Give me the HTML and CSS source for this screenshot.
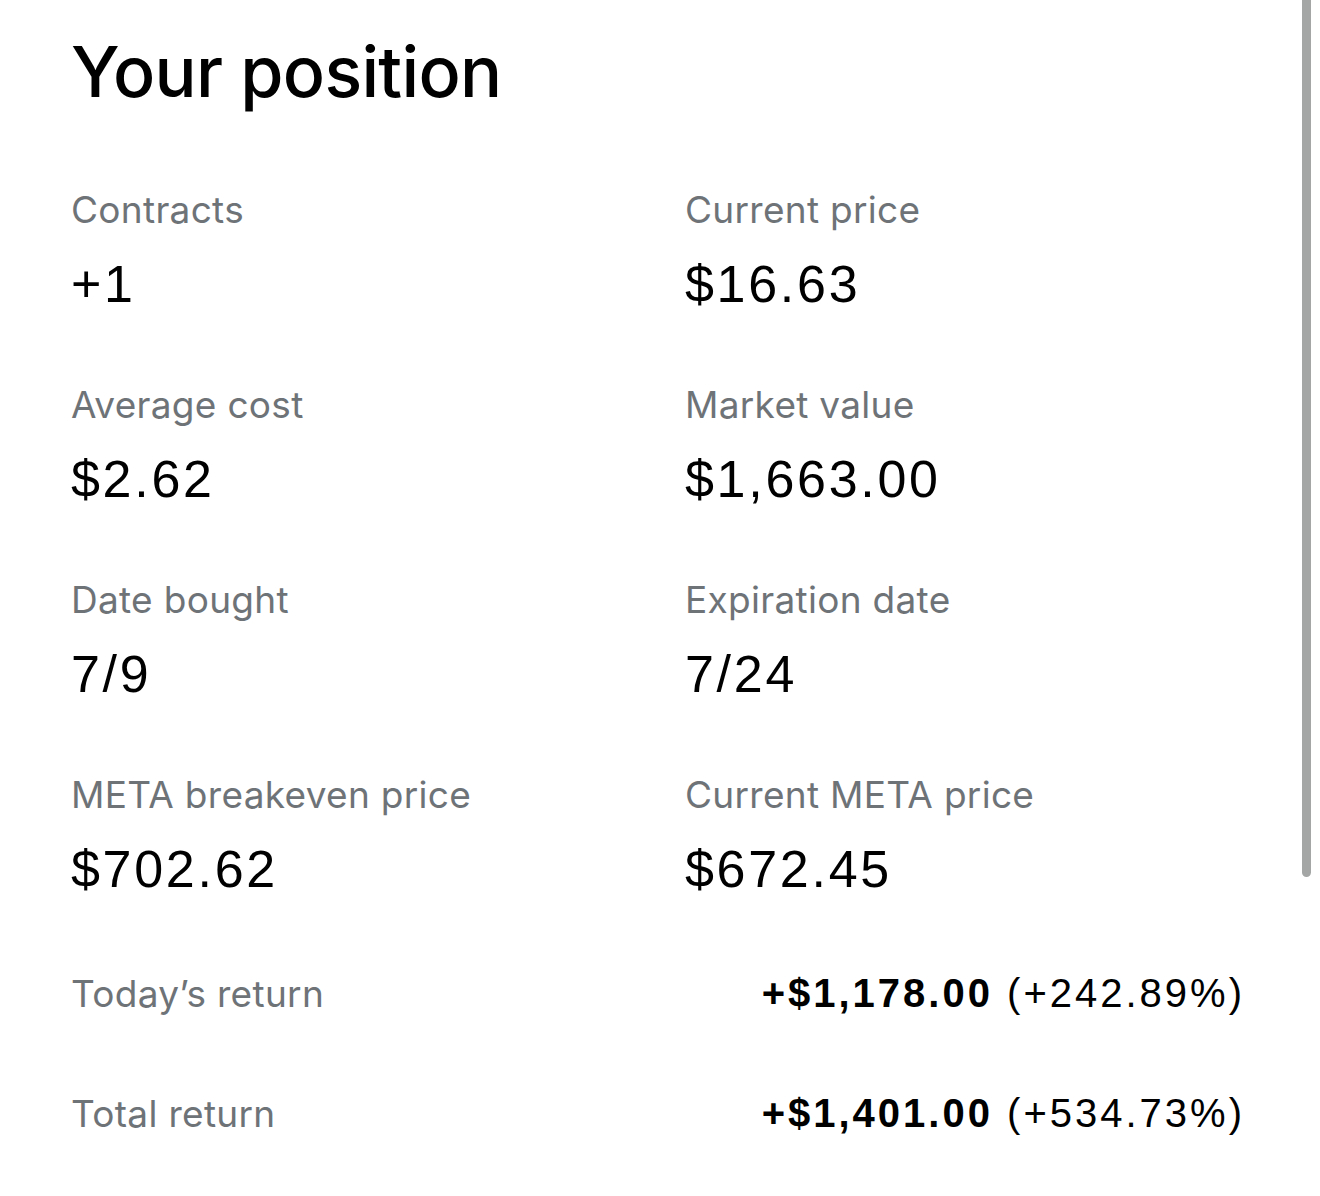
FILE: index.html
```html
<!DOCTYPE html>
<html lang="en">
<head>
    <meta charset="UTF-8">
    <title>Your position</title>
    <link rel="stylesheet" href="styles.css">
</head>
<body>
    <div class="page">
        <h1 class="title">Your position</h1>
        <div class="grid">
            <div class="field">
                <div class="label">Contracts</div>
                <div class="value">+1</div>
            </div>
            <div class="field">
                <div class="label">Current price</div>
                <div class="value">$16.63</div>
            </div>
            <div class="field">
                <div class="label">Average cost</div>
                <div class="value">$2.62</div>
            </div>
            <div class="field">
                <div class="label">Market value</div>
                <div class="value">$1,663.00</div>
            </div>
            <div class="field">
                <div class="label">Date bought</div>
                <div class="value">7/9</div>
            </div>
            <div class="field">
                <div class="label">Expiration date</div>
                <div class="value">7/24</div>
            </div>
            <div class="field">
                <div class="label">META breakeven price</div>
                <div class="value">$702.62</div>
            </div>
            <div class="field">
                <div class="label">Current META price</div>
                <div class="value">$672.45</div>
            </div>
        </div>
        <div class="returns">
            <div class="return-row">
                <div class="label">Today’s return</div>
                <div class="amount"><b>+$1,178.00</b> (+242.89%)</div>
            </div>
            <div class="return-row">
                <div class="label">Total return</div>
                <div class="amount"><b>+$1,401.00</b> (+534.73%)</div>
            </div>
        </div>
    </div>
    <div class="scrollbar"></div>
</body>
</html>
```

FILE: styles.css
```css
body {
    margin: 0;
    background: #fff;
    color: #000;
    font-family: Inter, "Noto Sans", sans-serif;
}
.page {
    padding: 0 75px 0 71px;
}
.title {
    margin: 0;
    padding-top: 28px;
    font-size: 70px;
    font-weight: 500;
    line-height: 88px;
    letter-spacing: -0.7px;
}
.grid {
    display: grid;
    grid-template-columns: 614px 1fr;
    row-gap: 69px;
    margin-top: 72px;
}
.label {
    font-size: 37px;
    line-height: 44px;
    color: #6e7378;
    letter-spacing: 0.3px;
}
.value {
    margin-top: 22px;
    font-family: "Liberation Sans", Arial, sans-serif;
    font-size: 52px;
    line-height: 60px;
    letter-spacing: 2.7px;
}
.returns {
    margin-top: 72px;
    display: flex;
    flex-direction: column;
    gap: 75px;
}
.return-row {
    display: flex;
    justify-content: space-between;
    align-items: baseline;
}
.amount {
    font-family: "Liberation Sans", Arial, sans-serif;
    font-size: 40px;
    line-height: 44px;
    letter-spacing: 3px;
}
.amount b {
    font-weight: 700;
}
.scrollbar {
    position: absolute;
    top: 0;
    right: 9px;
    width: 9px;
    height: 877px;
    background: #a4a6a5;
    border-radius: 0 0 5px 5px;
}
```
